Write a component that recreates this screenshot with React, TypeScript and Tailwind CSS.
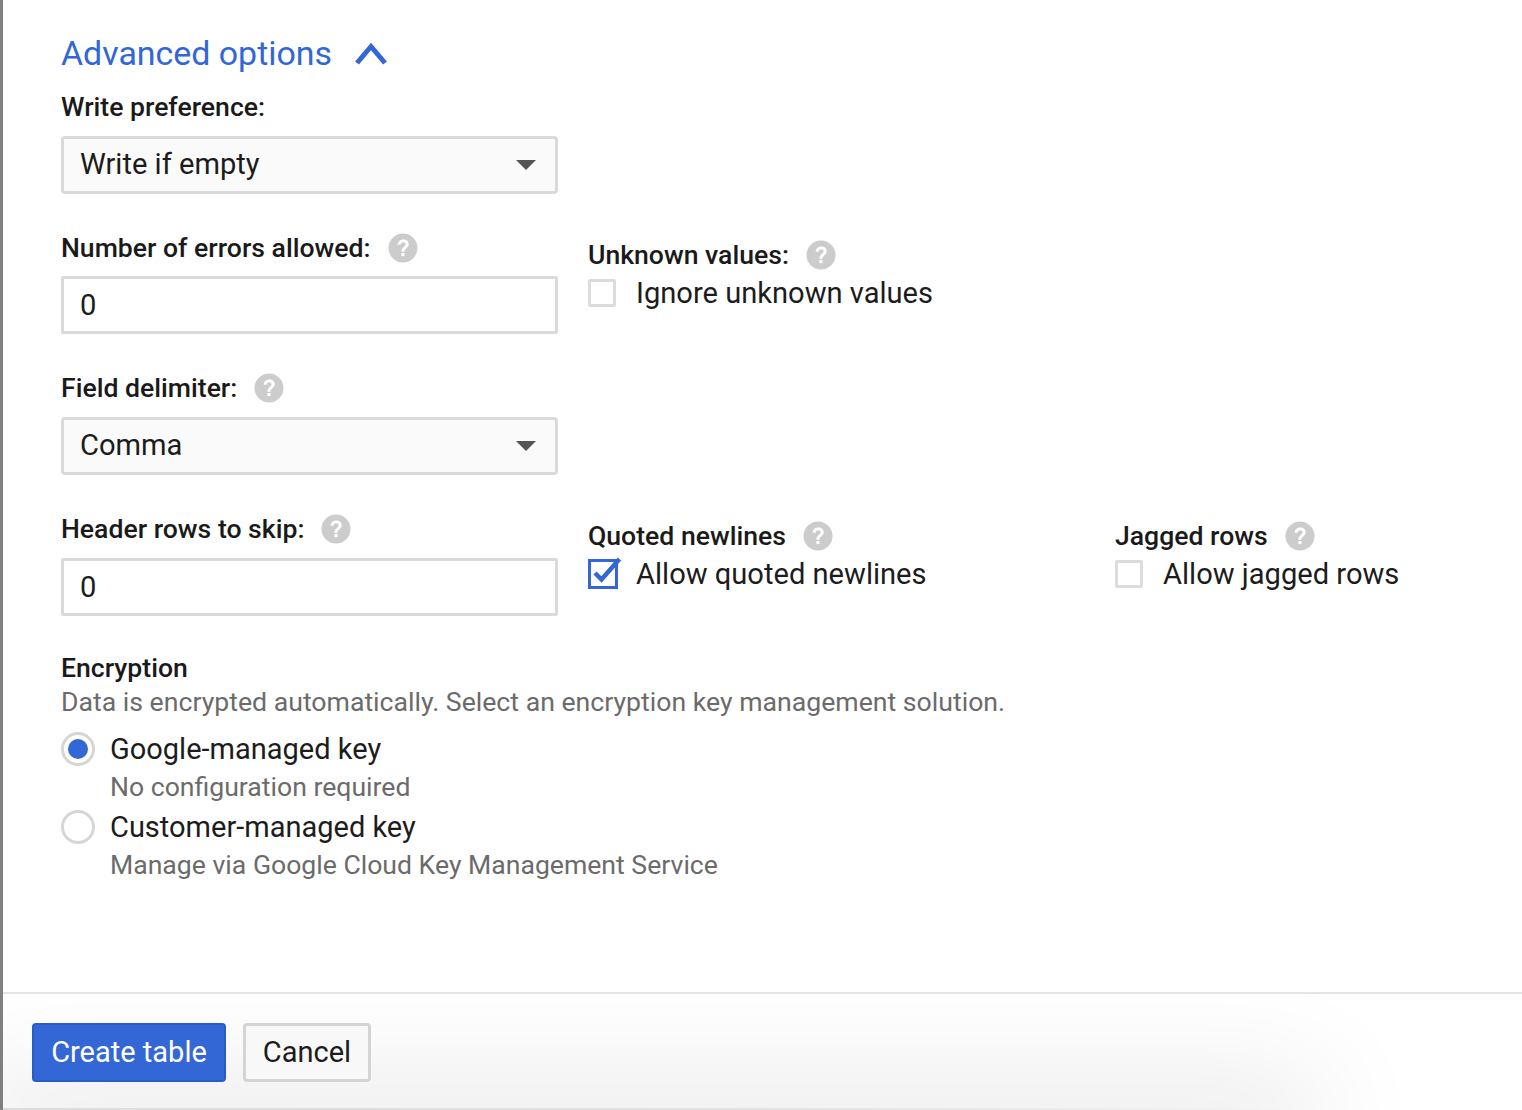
import React from 'react'

const Help = () => (
  <svg width="30" height="30" viewBox="0 0 30 30" className="shrink-0">
    <circle cx="15" cy="15" r="14.5" fill="#cccccc" />
    <path d="M9.600 11.800c.2-3.200 2.500-5.300 5.600-5.300 3.200 0 5.500 2 5.500 4.800 0 2-1.100 3.100-2.500 4.200-1.300 1-1.800 1.700-1.800 3.300h-3c0-2.400.7-3.600 2.200-4.800 1.100-.9 2-1.600 2-2.700 0-1.200-1-2.100-2.400-2.100-1.500 0-2.500 1-2.600 2.600z" fill="#ffffff" />
    <rect x="13.400" y="20" width="3.100" height="3.100" fill="#ffffff" />
  </svg>
)

const Label = ({ text }: { text: string }) => (
  <div className="flex items-center h-[30px]">
    <span className="text-[26.600px] font-medium text-[#1a1a1a] leading-none">{text}</span>
    <span className="ml-[17px]">
      <Help />
    </span>
  </div>
)

const Select = ({ value }: { value: string }) => (
  <div className="w-[497px] h-[58px] flex items-center justify-between pl-[16px] pr-[19px] bg-[#fafafa] border-[3px] border-[#dadada] rounded-[4px]">
    <span className="text-[29.100px] text-[#1c1c1c]">{value}</span>
    <span className="w-0 h-0 border-l-[10px] border-r-[10px] border-t-[10px] border-l-transparent border-r-transparent border-t-[#555555]" />
  </div>
)

const Input = ({ value }: { value: string }) => (
  <div className="w-[497px] h-[58px] flex items-center pl-[16px] pt-[2px] bg-white border-[3px] border-[#dadada] rounded-[2px]">
    <span className="text-[29.100px] text-[#1c1c1c]">{value}</span>
  </div>
)

const Checkbox = ({ text, checked }: { text: string; checked?: boolean }) => (
  <div className="flex items-center h-[34px]">
    {checked ? (
      <svg width="34" height="34" viewBox="0 0 34 34" className="shrink-0">
        <rect x="1.500" y="3.500" width="27" height="27" fill="#ffffff" stroke="#3367d6" strokeWidth="3" />
        <path d="M7 16l6.500 6.500L31.500 2" fill="none" stroke="#3367d6" strokeWidth="4.500" />
      </svg>
    ) : (
      <span className="block w-[28px] h-[28px] border-[3px] border-[#dcdcdc] rounded-[2px] mr-[6px]" />
    )}
    <span className="ml-[14px] pt-[2px] text-[29.100px] text-[#1c1c1c] whitespace-nowrap leading-none">{text}</span>
  </div>
)

const Radio = ({ title, note, on }: { title: string; note: string; on?: boolean }) => (
  <div className="flex mb-[3px]">
    <span className="w-[34px] h-[34px] mt-[2px] rounded-full border-[3px] border-[#d6d6d6] flex items-center justify-center shrink-0">
      {on && <span className="block w-[20px] h-[20px] rounded-full bg-[#3367d6]" />}
    </span>
    <div className="ml-[15px]">
      <div className="text-[29px] text-[#1c1c1c] leading-[38px]">{title}</div>
      <div className="text-[26.600px] text-[#6b6b6b] leading-[37px]">{note}</div>
    </div>
  </div>
)

export default function App() {
  return (
    <div className="w-[1522px] h-[1110px] flex flex-col overflow-hidden bg-white border-l-[3px] border-[#808080] font-['Roboto',sans-serif]">
      <div className="h-[992px] pl-[58px] pt-[30px] shrink-0">
        <div className="flex items-center h-[48px] text-[#3367d6]">
          <span className="text-[33.900px] leading-none">Advanced options</span>
          <svg width="34" height="26" viewBox="0 0 34 26" className="ml-[22px] mb-[2px]">
            <path d="M3 23L17 6.500 31 23" fill="none" stroke="#3367d6" strokeWidth="5" />
          </svg>
        </div>

        <div className="mt-[14px] h-[30px] flex items-center text-[26.600px] font-medium text-[#1a1a1a]">Write preference:</div>
        <div className="mt-[14px]">
          <Select value="Write if empty" />
        </div>

        <div className="flex mt-[39px]">
          <div className="w-[497px]">
            <Label text="Number of errors allowed:" />
            <div className="mt-[13px]">
              <Input value="0" />
            </div>
          </div>
          <div className="ml-[30px] pt-[7px]">
            <Label text="Unknown values:" />
            <div className="mt-[6px]">
              <Checkbox text="Ignore unknown values" />
            </div>
          </div>
        </div>

        <div className="mt-[39px]">
          <Label text="Field delimiter:" />
          <div className="mt-[14px]">
            <Select value="Comma" />
          </div>
        </div>

        <div className="flex mt-[39px]">
          <div className="w-[497px]">
            <Label text="Header rows to skip:" />
            <div className="mt-[14px]">
              <Input value="0" />
            </div>
          </div>
          <div className="ml-[30px] pt-[7px] w-[527px]">
            <Label text="Quoted newlines" />
            <div className="mt-[6px]">
              <Checkbox text="Allow quoted newlines" checked />
            </div>
          </div>
          <div className="pt-[7px]">
            <Label text="Jagged rows" />
            <div className="mt-[6px]">
              <Checkbox text="Allow jagged rows" />
            </div>
          </div>
        </div>

        <div className="mt-[35px] text-[26.600px] font-medium text-[#1a1a1a] leading-[34px]">Encryption</div>
        <div className="text-[26.650px] text-[#6b6b6b] leading-[34px] whitespace-nowrap">Data is encrypted automatically. Select an encryption key management solution.</div>
        <div className="mt-[11px]">
          <Radio title="Google-managed key" note="No configuration required" on />
          <Radio title="Customer-managed key" note="Manage via Google Cloud Key Management Service" />
        </div>
      </div>

      <div className="relative flex-1 border-t-[2px] border-[#e4e4e4] overflow-hidden pl-[29px] pt-[29px] flex items-start gap-[17px]">
        <div className="absolute left-0 top-full w-[1290px] h-[10px] shadow-[0_0_110px_30px_rgba(0,0,0,0.1)]" />
        <div className="absolute left-0 bottom-0 w-[1290px] h-[2px] bg-gradient-to-r from-[#dcdcdc] via-[#e0e0e0] to-transparent" />
        <button className="relative w-[194px] h-[59px] bg-[#3367d6] border-[2px] border-[#2a5cc9] rounded-[4px] text-white text-[29px]">Create table</button>
        <button className="relative w-[128px] h-[59px] bg-[#f8f8f8] border-[3px] border-[#d4d4d4] rounded-[4px] text-[#1c1c1c] text-[29px]">Cancel</button>
      </div>
    </div>
  )
}
